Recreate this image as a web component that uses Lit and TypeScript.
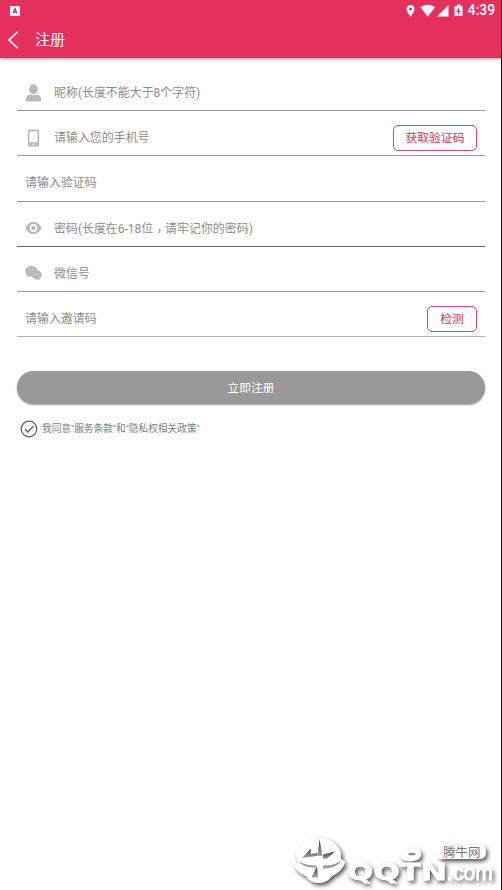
import { LitElement, html, css, svg, nothing } from "lit";
import { customElement } from "lit/decorators.js";

const icons = {
  user: svg`<ellipse cx="9" cy="5.3" rx="4.5" ry="5"/><path d="M1 17.500v-2.800c0-2.600 2.500-3.900 5.300-4.300 1.700 1 3.700 1 5.400 0 2.800.4 5.300 1.700 5.300 4.300v2.800z"/>`,
  phone: svg`<path fill-rule="evenodd" d="M4.500 .5h9q1.500 0 1.500 1.500v14q0 1.500-1.500 1.500h-9Q3 17.500 3 16V2Q3 .5 4.500 .5zM4.700 2.200v11h8.600V2.200zM8 14.500v1.300h2v-1.300z"/>`,
  eye: svg`<path fill-rule="evenodd" d="M.3 9C3 4.500 5.500 3 9 3s6 1.500 8.700 6c-2.700 4.500-5.200 6-8.700 6S3 13.500 .3 9zM9 5a4 4 0 1 0 0 8 4 4 0 0 0 0-8z"/><circle cx="9" cy="9" r="2.300"/>`,
  wechat: svg`<path d="M6.500 2C3 2 .3 4.300.3 7.400c0 1.700.9 3.100 2.300 4L2 13.500l2.400-1.200c.8.200 1.700.3 2.600.2L13 6c-.6-2.400-3.200-4-6.500-4z"/><path d="M12.300 6.300c-3 0-5.300 2-5.300 4.600s2.300 4.600 5.300 4.600c.6 0 1.200-.1 1.800-.3l2.200 1-.5-1.700c1.100-.8 1.900-2 1.900-3.600 0-2.600-2.300-4.600-5.400-4.600z"/><g fill="#e4e4e4"><circle cx="4.500" cy="6" r=".7"/><circle cx="8.500" cy="5.500" r=".7"/><circle cx="11" cy="10" r=".6"/><circle cx="14.300" cy="10" r=".6"/></g>`,
};

interface Field {
  label: unknown;
  icon?: keyof typeof icons;
  action?: string;
  tone: string;
}

const fields: Field[] = [
  { label: "昵称(长度不能大于8个字符)", icon: "user", tone: "mid" },
  { label: "请输入您的手机号", icon: "phone", action: "获取验证码", tone: "mid" },
  { label: "请输入验证码", tone: "mid" },
  { label: html`密码(长度在6-18位<span class="comma">，</span>请牢记你的密码)`, icon: "eye", tone: "dark" },
  { label: "微信号", icon: "wechat", tone: "mid" },
  { label: "请输入邀请码", action: "检测", tone: "light" },
];

@customElement("app-root")
export class AppRoot extends LitElement {
  static styles = css`
    :host {
      display: block;
      position: relative;
      box-sizing: border-box;
      height: 890px;
      overflow: hidden;
      background: #fff;
      border-right: 1px solid #111;
      font-family: Roboto, "Noto Sans CJK SC", sans-serif;
    }
    svg { display: block; flex: none; }
    header {
      height: 58px;
      background: #e3305c;
      color: #fff;
      box-shadow: 0 1px 3px rgba(0, 0, 0, 0.4);
    }
    .status {
      display: flex;
      align-items: center;
      justify-content: space-between;
      height: 21px;
      padding: 0 6px 0 10px;
    }
    .tray { display: flex; align-items: center; }
    .time { font-size: 13.800px; font-weight: 500; line-height: 21px; margin-left: 5px; }
    .nav { display: flex; align-items: center; height: 37px; padding-left: 7px; }
    .title { font-size: 15px; line-height: 20px; margin: 0 0 0 16px; font-weight: 400; }
    main { padding: 8px 16px 0 17px; }
    .row {
      display: flex;
      align-items: center;
      box-sizing: border-box;
      height: 45.200px;
      padding: 9px 8px 0;
      border-bottom: 1px solid #999;
      color: #8c8c8c;
      font-size: 11.950px;
    }
    .row.dark { border-color: #666; }
    .row.light { border-color: #b0b0b0; }
    .row svg { margin-right: 12px; fill: #b9b9b9; }
    .label { flex: 1; white-space: nowrap; line-height: 18px; padding-top: 1px; }
    .comma {
      font-family: "Noto Sans CJK TC", sans-serif;
      line-height: 1;
      vertical-align: -3px;
    }
    button { font: inherit; padding: 0; }
    .action {
      box-sizing: border-box;
      height: 26px;
      min-width: 50px;
      padding: 0 11.500px 2px;
      border: 1px solid #d04a70;
      border-radius: 5px;
      background: #fff;
      color: #d62f5a;
      font-size: 11.800px;
    }
    .submit {
      display: block;
      width: 100%;
      height: 33px;
      margin-top: 33.500px;
      padding-bottom: 2px;
      border: 0;
      border-radius: 17px;
      background: #999;
      color: #fff;
      font-size: 11.700px;
      box-shadow: 0 1px 2px rgba(0, 0, 0, 0.4);
    }
    .agree {
      display: flex;
      align-items: center;
      gap: 4px;
      margin: 16px 0 0 3px;
      color: #808080;
      font-size: 9.700px;
      line-height: 18px;
    }
    .mark { position: absolute; right: 0; bottom: 0; }
    .mark .word { font: 700 23px "DejaVu Sans", sans-serif; stroke: #fff; stroke-width: 0.3; }
    .mark .com { font: 400 22px "Liberation Sans", sans-serif; stroke: #fff; stroke-width: 0.6; }
    .mark .cn { font: 400 12.500px "Noto Sans CJK SC", sans-serif; }
  `;

  private field(f: Field) {
    return html`<div class="row ${f.tone}">
      ${f.icon ? html`<svg width="17" height="18" viewBox="0 0 18 18" preserveAspectRatio="none">${icons[f.icon]}</svg>` : nothing}
      <span class="label">${f.label}</span>
      ${f.action ? html`<button class="action">${f.action}</button>` : nothing}
    </div>`;
  }

  render() {
    return html`
      <header>
        <div class="status">
          <svg width="10" height="10" viewBox="0 0 10 10"><rect width="10" height="10" rx="1" fill="#fff"/><path d="M3 7.500 5 2.500l2 5M3.700 6h2.600" fill="none" stroke="#a34b62" stroke-width="1.300"/></svg>
          <div class="tray">
            <svg width="58" height="14" viewBox="0 0 58 14" fill="#fff">
              <path fill-rule="evenodd" d="M5.500 1C3 1 1.500 2.800 1.500 5c0 3 4 7.500 4 7.500s4-4.500 4-7.500c0-2.200-1.500-4-4-4zm0 2.600a1.500 1.500 0 1 1 0 3 1.500 1.500 0 0 1 0-3z"/>
              <path d="M15.500 3.500C19.500-.1 26-.1 30 3.500L22.700 12.500z"/>
              <path d="M43.500 1v11.500h-11.500z"/>
              <path fill-rule="evenodd" d="M52 .5h3.500V2h2v10h-8V2H52zM54.200 3.300 51 7.800h2v3.200L56 6.700h-2z"/>
            </svg>
            <span class="time">4:39</span>
          </div>
        </div>
        <div class="nav">
          <svg width="12" height="20" viewBox="0 0 12 20"><path d="M10.500 2 2 10l8.500 8" fill="none" stroke="#fff" stroke-width="1.700"/></svg>
          <h1 class="title">注册</h1>
        </div>
      </header>
      <main>
        ${fields.map((f) => this.field(f))}
        <button class="submit">立即注册</button>
        <div class="agree">
          <svg width="18" height="18" viewBox="0 0 18 18" fill="none" stroke="#666"><circle cx="9" cy="9" r="7.800" stroke-width="1.300"/><path d="M5 9.300 7.800 12 13.300 6.300" stroke-width="1.500"/></svg>
          <span>我同意"服务条款"和"隐私权相关政策"</span>
        </div>
      </main>
      <svg class="mark" width="219" height="65" viewBox="0 0 219 65">
        <defs>
          <filter id="shade" x="-10%" y="-20%" width="125%" height="150%">
            <feDropShadow dx="2" dy="2.500" stdDeviation="2" flood-color="#000" flood-opacity=".7"/>
          </filter>
          <filter id="soft" x="-20%" y="-20%" width="140%" height="140%"><feGaussianBlur stdDeviation=".7"/></filter>
          <linearGradient id="slit" x1="0" y1="0" x2="0" y2="1"><stop offset="0" stop-color="#333"/><stop offset="1" stop-color="#aaa"/></linearGradient>
        </defs>
        <g fill="#fff" filter="url(#shade)">
          <path d="M14 30C16 20 25 13 37 13c11 0 20 7 22 16l0 5 4 3c-2 7-7 11-13 14-3 4-8 7-13 7-6 0-10-3-13-7-7-3-11-7-13-14l5 2z"/>
          <text class="word" x="65" y="55" textLength="100" lengthAdjust="spacingAndGlyphs">QQTN</text>
          <path fill-rule="evenodd" d="M119 31c0-5 7-8 13-7 5 0 7 2 7 5s-2 6-8 7-12-1-12-5zm7-2c0 2 8 2 8 0s-8-2-8 0z"/>
          <path d="M166 20h32q6 0 6 6v1q0 7-7 7h-38q-3 0-3-3 4-3 5-8 1-3 5-3z"/>
          <text class="com" x="165" y="55" textLength="46" lengthAdjust="spacingAndGlyphs">.com</text>
        </g>
        <g fill="url(#slit)" filter="url(#soft)">
          <path d="M20 33 29 23.500l-.500 5.500 7.500-1-1 3z"/>
          <path d="M37.500 14 40.500 31h-5z"/>
          <path d="M41 29.500 53 26.500l-8 7-4 .5z"/>
          <path d="M35 41 29.500 52.500h6.500z"/>
          <path d="M17 36.500Q24 41 34 40.500v2Q22 43 17 36.500zM41 40.500Q52 41 59 36 54 43 41 44z" opacity=".8"/>
        </g>
        <text class="cn" x="161" y="31.500" fill="#777">腾牛网</text>
      </svg>
    `;
  }
}
